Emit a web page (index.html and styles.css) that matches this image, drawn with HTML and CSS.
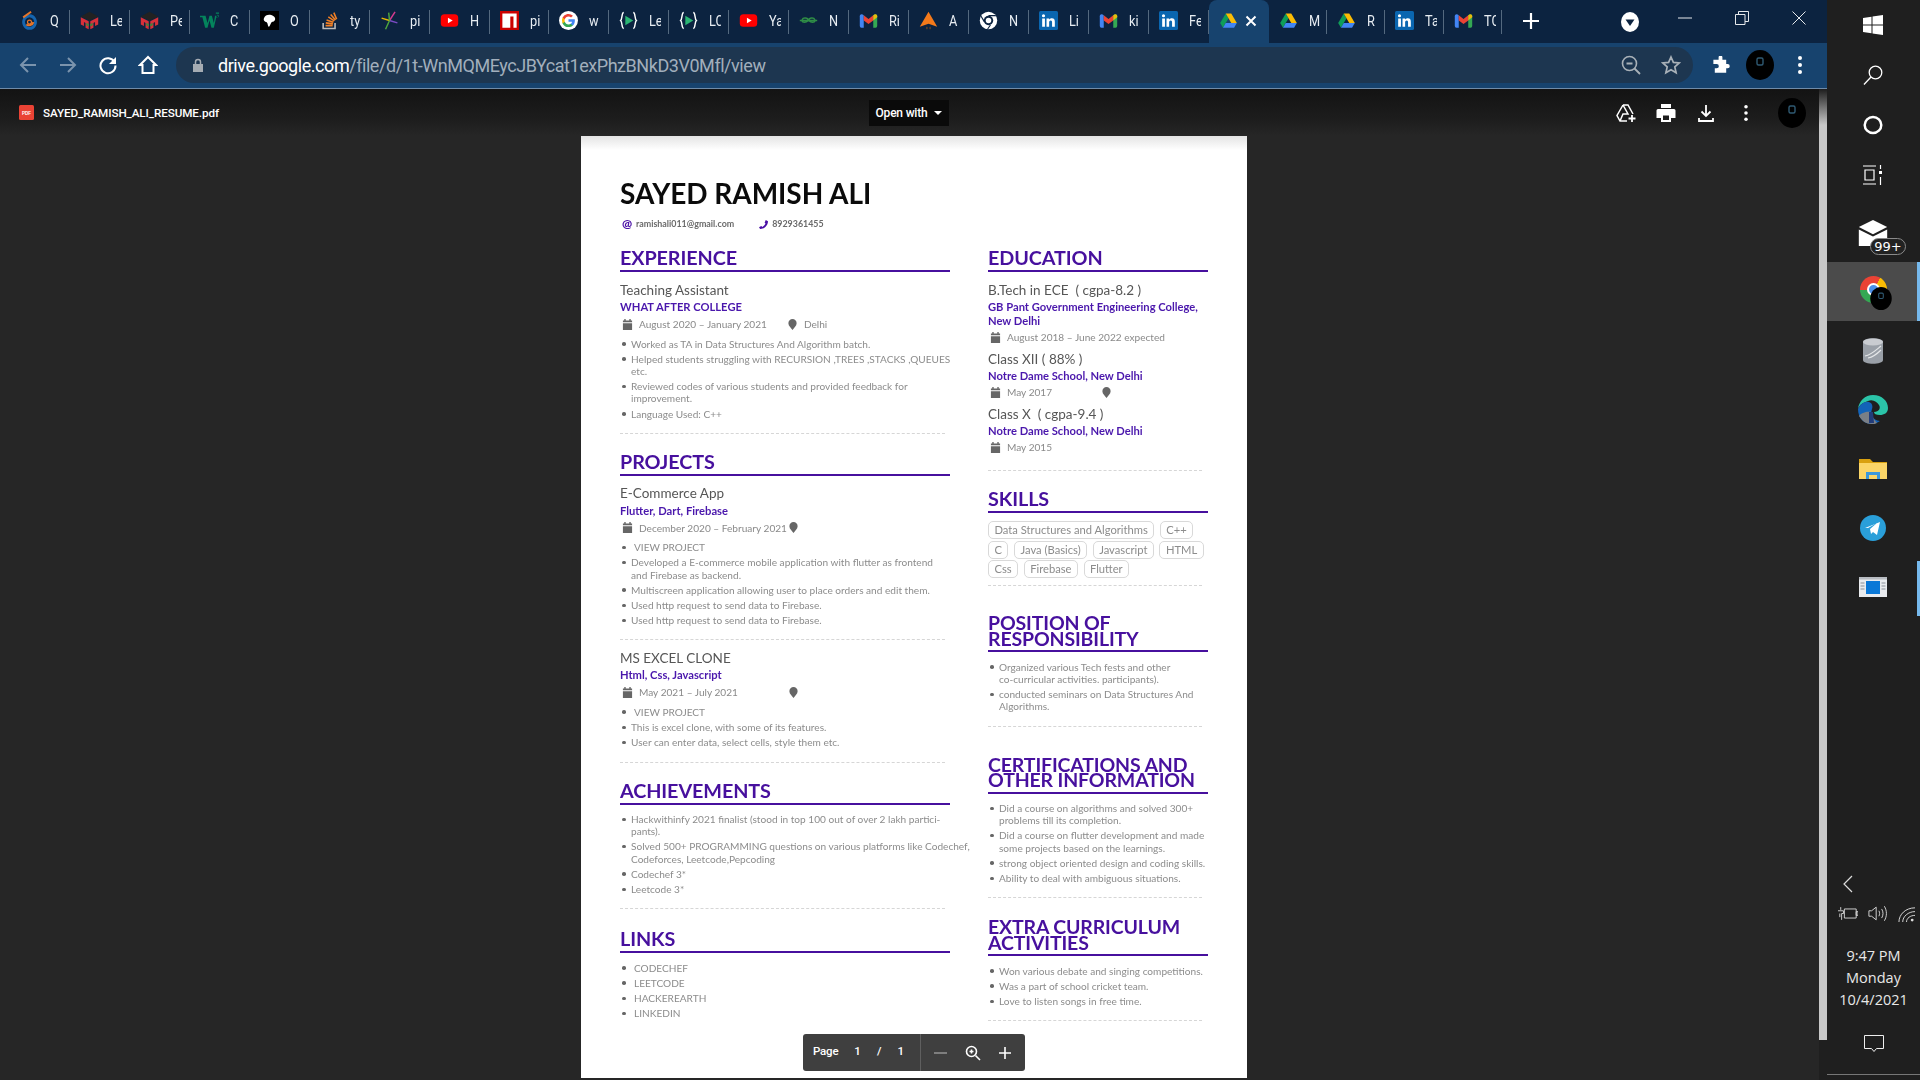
FILE: index.html
```html
<!DOCTYPE html>
<html lang="en">
<head>
<meta charset="utf-8">
<title>SAYED_RAMISH_ALI_RESUME.pdf</title>
<link rel="stylesheet" href="styles.css">
</head>
<body>
<svg class="defs" width="0" height="0" aria-hidden="true">
  <symbol id="quora" viewBox="0 0 24 24"><path fill="none" stroke="#1565b0" stroke-width="3.5" d="M12 6a7.5 8 0 1 0 .1 0"/><path fill="none" stroke="#e8762a" stroke-width="2.5" d="M8 17a6 6 0 0 0 9-3M4 8 14 1"/><circle cx="12" cy="14" r="2.5" fill="none" stroke="#e8762a" stroke-width="1.5"/></symbol>
  <symbol id="pep" viewBox="0 0 24 24"><path fill="#222" d="M12 1 23 7 12 12 1 7z"/><path fill="#d8303a" d="M1 8 11 13v10L7 21v-6l-2-1v5l-4-2z"/><path fill="#d8303a" d="M23 8 13 13v10l4-2v-6l2-1v5l4-2z"/><path fill="#3a8a3a" d="M8 15l3 1.500v3l-3-1.500zM16 15l-3 1.500v3l3-1.500z"/></symbol>
  <symbol id="w3" viewBox="0 0 24 24"><path fill="#04845c" d="M0 6h7l2.500 9L12 6h3l2.500 9L19 6h2l-3.500 15h-3L12 12l-2.500 9h-3L3 8H0z"/><path fill="#04845c" d="M20 2h4v1l-2 1.500a2 2 0 1 1-2 3h1a1 1 0 1 0 1-1.500V5l1-1.500h-3z"/></symbol>
  <symbol id="blob" viewBox="0 0 24 24"><rect width="24" height="24" fill="#000"/><path fill="#fff" d="M5 9c1-4 6-5 9-4s6 3 5 6-4 2-5 4-2 5-3 5-1-5-3-6-4-2-3-5z"/></symbol>
  <symbol id="so" viewBox="0 0 24 24"><path fill="none" stroke="#bcbbbb" stroke-width="2" d="M4 15v7h15v-7"/><path fill="none" stroke="#f48024" stroke-width="2" d="M7 18.500h9M7.300 15l9 1.300M8.300 11.300l8.600 3M10.500 7.500l7.500 5M13.500 4.500l6 7M17.500 2l3.500 8.500"/></symbol>
  <symbol id="pi" viewBox="0 0 24 24"><g fill="none" stroke-width="1.800"><path stroke="#d63b8f" d="M12 12 19 1"/><path stroke="#7b4bc4" d="M12 12 22 15"/><path stroke="#e8b800" d="M12 12 2 9"/><path stroke="#4fa83d" d="M12 12 7 23"/><path stroke="#4fa83d" d="M12 12 11 2"/></g></symbol>
  <symbol id="yt" viewBox="0 0 24 24"><rect x="1" y="4" width="22" height="16" rx="4.500" fill="#f00"/><path fill="#fff" d="M10 8.500 16 12l-6 3.500z"/></symbol>
  <symbol id="npm" viewBox="0 0 24 24"><rect width="24" height="24" fill="#cb0000"/><path fill="#fff" d="M3 3h18v18h-4V7h-4v14H3z"/></symbol>
  <symbol id="goog" viewBox="0 0 24 24"><circle cx="12" cy="12" r="12" fill="#fff"/><path fill="#4285f4" d="M20 12.200c0-.6 0-1.100-.1-1.700H12v3.200h4.500a3.900 3.900 0 0 1-1.700 2.500v2.100h2.700c1.600-1.400 2.500-3.500 2.500-6.100z"/><path fill="#34a853" d="M12 20.300c2.300 0 4.100-.8 5.500-2l-2.700-2.100c-.7.500-1.700.8-2.800.8-2.200 0-4-1.500-4.700-3.400H4.500v2.100A8.300 8.300 0 0 0 12 20.300z"/><path fill="#fbbc05" d="M7.300 13.600a5 5 0 0 1 0-3.200V8.300H4.500a8.300 8.300 0 0 0 0 7.400z"/><path fill="#ea4335" d="M12 7c1.200 0 2.300.4 3.200 1.300l2.400-2.400A8.300 8.300 0 0 0 4.500 8.300l2.800 2.100C8 8.500 9.800 7 12 7z"/></symbol>
  <symbol id="lc" viewBox="0 0 24 24"><path fill="none" stroke="#fff" stroke-width="1.800" d="M6 2C3 2 4.500 10 2 12c2.500 2 1 10 4 10M18 2c3 0 1.500 8 4 10-2.500 2-1 10-4 10"/><path fill="#2bb673" d="M8 6 18 12 8 18z"/></symbol>
  <symbol id="gfg" viewBox="0 0 24 24"><path fill="none" stroke="#2f8d46" stroke-width="1.800" d="M12 12h11M12 12H1M12 12c-1-4-7-4-8-1s3 5 8 1c5 4 9 2 8-1s-7-3-8 1z"/></symbol>
  <symbol id="gm" viewBox="0 0 24 24"><path fill="#4285f4" d="M1 6.500c0-2 2-3 3.500-2L6 5.500V21H3a2 2 0 0 1-2-2z"/><path fill="#34a853" d="M23 6.500c0-2-2-3-3.500-2L18 5.500V21h3a2 2 0 0 0 2-2z"/><path fill="#ea4335" d="M6 5.500 12 10l6-4.500V12l-6 4.500L6 12z"/><path fill="#fbbc04" d="M18 5.500 19.500 4.500c1.500-1 3.500 0 3.500 2V8l-5 4z" opacity=".9"/></symbol>
  <symbol id="arrow" viewBox="0 0 24 24"><path fill="#f57a1a" d="M12 1 23 20 12 16 1 20z"/><path stroke="#a85a10" stroke-width="1" d="M10 20v3M14 20v3"/></symbol>
  <symbol id="chromew" viewBox="0 0 24 24"><circle cx="12" cy="12" r="11" fill="#fff"/><circle cx="12" cy="12" r="6" fill="#0c2340"/><circle cx="12" cy="12" r="3.500" fill="#fff"/><path fill="#0c2340" d="M12 5h9l.5 1.500H12zM6 14 2 7l1-1 5 8zM15 18l-3.500 5h-1.500l4-6z"/></symbol>
  <symbol id="li" viewBox="0 0 24 24"><rect width="24" height="24" rx="2" fill="#0a66b0"/><path fill="#fff" d="M4 9.500h3.500V20H4zM5.700 4a2 2 0 1 1 0 4 2 2 0 0 1 0-4zM9.500 9.500h3.300V11c.6-1 1.800-1.800 3.400-1.800 3.200 0 3.800 2.100 3.800 4.800v6h-3.500v-5.300c0-1.300 0-2.800-1.700-2.800s-2 1.300-2 2.700V20H9.500z"/></symbol>
  <symbol id="drive" viewBox="0 0 24 24"><path fill="#0f9d58" d="M8.500 3 12 9 5 21 1.500 15z"/><path fill="#fbbc04" d="M8.500 3h7l7 12h-7z"/><path fill="#4285f4" d="M8.500 15h14l-3.500 6H5z"/></symbol>
  <symbol id="cal" viewBox="0 0 12 12"><path fill="#666" d="M2.500 0h1.500v1.500h4V0h1.500v1.500H11V3.500H1V1.500h1.500zM1 4.500h10V12H1z"/></symbol>
  <symbol id="pin" viewBox="0 0 12 12"><path fill="#666" d="M6 0a4.500 4.500 0 0 1 4.500 4.500C10.500 7.500 7.500 9.500 6 12 4.500 9.500 1.500 7.500 1.500 4.500A4.500 4.500 0 0 1 6 0z"/></symbol>
  <symbol id="dots" viewBox="0 0 4 18"><circle cx="2" cy="2" r="2"/><circle cx="2" cy="9" r="2"/><circle cx="2" cy="16" r="2"/></symbol>
  <symbol id="ava" viewBox="0 0 28 30"><ellipse cx="14" cy="15" rx="14" ry="15" fill="#000"/><rect x="11" y="8" width="6" height="7" rx="1.500" fill="none" stroke="#2f5a73" stroke-width="1.400"/></symbol>
</svg>

<div class="screen">
  <div class="browser">
    <div class="tabstrip">
      <div class="tab"><svg class="fav"><use href="#quora"/></svg><span class="tl">Q</span></div>
      <div class="tab"><svg class="fav"><use href="#pep"/></svg><span class="tl">Le</span></div>
      <div class="tab"><svg class="fav"><use href="#pep"/></svg><span class="tl">Pe</span></div>
      <div class="tab"><svg class="fav"><use href="#w3"/></svg><span class="tl">C</span></div>
      <div class="tab"><svg class="fav"><use href="#blob"/></svg><span class="tl">O</span></div>
      <div class="tab"><svg class="fav"><use href="#so"/></svg><span class="tl">ty</span></div>
      <div class="tab"><svg class="fav"><use href="#pi"/></svg><span class="tl">pi</span></div>
      <div class="tab"><svg class="fav"><use href="#yt"/></svg><span class="tl">H</span></div>
      <div class="tab"><svg class="fav"><use href="#npm"/></svg><span class="tl">pi</span></div>
      <div class="tab"><svg class="fav"><use href="#goog"/></svg><span class="tl">w</span></div>
      <div class="tab"><svg class="fav"><use href="#lc"/></svg><span class="tl">Le</span></div>
      <div class="tab"><svg class="fav"><use href="#lc"/></svg><span class="tl">LC</span></div>
      <div class="tab"><svg class="fav"><use href="#yt"/></svg><span class="tl">Ya</span></div>
      <div class="tab"><svg class="fav"><use href="#gfg"/></svg><span class="tl">N</span></div>
      <div class="tab"><svg class="fav"><use href="#gm"/></svg><span class="tl">Ri</span></div>
      <div class="tab"><svg class="fav"><use href="#arrow"/></svg><span class="tl">A</span></div>
      <div class="tab"><svg class="fav"><use href="#chromew"/></svg><span class="tl">N</span></div>
      <div class="tab"><svg class="fav"><use href="#li"/></svg><span class="tl">Li</span></div>
      <div class="tab"><svg class="fav"><use href="#gm"/></svg><span class="tl">ki</span></div>
      <div class="tab"><svg class="fav"><use href="#li"/></svg><span class="tl">Fe</span></div>
      <div class="tab tab-active"><svg class="fav"><use href="#drive"/></svg><svg class="tabx" viewBox="0 0 12 12"><path d="M1.500 1.500l9 9M10.500 1.500l-9 9"/></svg></div>
      <div class="tab tab-narrow"><svg class="fav"><use href="#drive"/></svg><span class="tl">M</span></div>
      <div class="tab tab-narrow"><svg class="fav"><use href="#drive"/></svg><span class="tl">R</span></div>
      <div class="tab tab-narrow"><svg class="fav"><use href="#li"/></svg><span class="tl">Ta</span></div>
      <div class="tab tab-narrow"><svg class="fav"><use href="#gm"/></svg><span class="tl">TC</span></div>
      <svg class="newtab" viewBox="0 0 16 16"><path d="M8 0v16M0 8h16"/></svg>
      <svg class="tabdrop" viewBox="0 0 18 20"><ellipse cx="9" cy="10" rx="9" ry="10" fill="#fff"/><path d="M4.500 7.500h9L9 14z" fill="#0c2340"/></svg>
      <div class="winbtns">
        <svg class="win" viewBox="0 0 14 14"><path d="M0 7h14"/></svg>
        <svg class="win" viewBox="0 0 14 14"><path d="M.5 3.500h9.500V13.500H.5zM3.500 3.500V.5H13.500V10.500H10"/></svg>
        <svg class="win" viewBox="0 0 14 14"><path d="M.5.500l13 13M13.500.5l-13 13"/></svg>
      </div>
    </div>

    <div class="toolbar">
      <svg class="tbi" viewBox="0 0 20 20"><path class="dim" d="M18 10H3M10 3l-7 7 7 7"/></svg>
      <svg class="tbi" viewBox="0 0 20 20"><path class="dim" d="M2 10h15M10 3l7 7-7 7"/></svg>
      <svg class="tbi" viewBox="0 0 20 20"><path class="lit" d="M16.500 7A7.500 7.500 0 1 0 17.500 10.500"/><path fill="#fff" d="M18 2v7h-7z"/></svg>
      <svg class="tbi" viewBox="0 0 20 20"><path class="lit" d="M10 2 2 10h2.500v8h11v-8H18z"/></svg>
      <div class="omni">
        <svg class="lock" viewBox="0 0 12 14"><path fill="#a5acb3" d="M1 6h10v8H1z"/><path fill="none" stroke="#a5acb3" stroke-width="1.500" d="M3.500 6V4a2.500 2.500 0 0 1 5 0v2"/></svg>
        <div class="url"><span class="host">drive.google.com</span>/file/d/1t-WnMQMEycJBYcat1exPhzBNkD3V0Mfl/view</div>
        <svg class="omi" viewBox="0 0 20 20"><circle cx="8.500" cy="8.500" r="7" fill="none" stroke="#a9b1b8" stroke-width="1.600"/><path stroke="#a9b1b8" stroke-width="1.800" d="M13.500 13.500 19 19M5.500 8.500h6"/></svg>
        <svg class="omi" viewBox="0 0 20 20"><path fill="none" stroke="#a9b1b8" stroke-width="1.700" d="M10 2l2.400 5.400 5.800.6-4.400 3.900 1.300 5.800L10 14.700l-5.100 3 1.300-5.800L1.800 8l5.800-.6z"/></svg>
      </div>
      <svg class="puzzle" viewBox="0 0 20 20"><path fill="#fff" d="M8 1.500a2 2 0 0 1 4 0V4h4v4.500h1.500a2 2 0 0 1 0 4.500H16v4.500H4V13H6a2 2 0 0 0 0-4.500H2.500V4H8z"/></svg>
      <svg class="avatar"><use href="#ava"/></svg>
      <svg class="tbdots" fill="#fff"><use href="#dots"/></svg>
    </div>

    <div class="viewer">
      <div class="docarea">
        <div class="dochead">
          <svg class="pdficon" viewBox="0 0 15 15"><rect width="15" height="15" rx="1.500" fill="#ea4335"/><text x="7.500" y="9.500" text-anchor="middle" class="pdft">PDF</text></svg>
          <div class="fname">SAYED_RAMISH_ALI_RESUME.pdf</div>
          <div class="openwith">Open with<span class="caret"></span></div>
          <div class="headicons">
            <svg class="hi" viewBox="0 0 20 20"><path fill="none" stroke="#fff" stroke-width="1.500" d="M7 2h5l5 9M7 2 1 12.500 4 18h7M7 2l5 9H7l-3 7"/><path stroke="#fff" stroke-width="1.800" d="M16 12v7M12.500 15.500h7"/></svg>
            <svg class="hi" viewBox="0 0 20 20"><path fill="#fff" d="M5 1h10v4H5zM2 6h16a1.500 1.500 0 0 1 1.500 1.500V15H15v4H5v-4H.5V7.500A1.500 1.500 0 0 1 2 6zM7 12.500V17h6v-4.500z"/></svg>
            <svg class="hi" viewBox="0 0 20 20"><path fill="none" stroke="#fff" stroke-width="1.800" d="M10 2v10M5.500 8.500 10 13l4.500-4.500M3 15v3h14v-3"/></svg>
            <svg class="hi hi-dots" fill="#fff"><use href="#dots"/></svg>
            <svg class="hi-ava"><use href="#ava"/></svg>
          </div>
        </div>

        <div class="page">
          <div class="paper">
            <h1 class="name">SAYED RAMISH ALI</h1>
            <div class="contact">
              <span class="cicon">@</span><span class="ctext ctext-mail">ramishali011@gmail.com</span>
              <svg class="phone" viewBox="0 0 12 12"><path fill="#4a10a6" d="M9 0l3 1.500C12 7 7 12 1.500 12L0 9.500 3 8l1.500 1.300C6 8.500 8 6.500 8.700 4.800L7.500 3.500z"/></svg><span class="ctext">8929361455</span>
            </div>
            <div class="cols">
              <div class="col-left">
                <section>
                  <h2 class="h">EXPERIENCE</h2>
                  <div class="title">Teaching Assistant</div>
                  <div class="org">WHAT AFTER COLLEGE</div>
                  <div class="meta"><svg class="mi"><use href="#cal"/></svg><span class="mdate">August 2020 – January 2021</span><svg class="mi mi-pin1"><use href="#pin"/></svg><span>Delhi</span></div>
                  <ul class="list">
                    <li>Worked as TA in Data Structures And Algorithm batch.</li>
                    <li class="wide">Helped students struggling with RECURSION ,TREES ,STACKS ,QUEUES etc.</li>
                    <li>Reviewed codes of various students and provided feedback for improvement.</li>
                    <li>Language Used: C++</li>
                  </ul>
                  <div class="dash"></div>
                </section>
                <section class="sec">
                  <h2 class="h">PROJECTS</h2>
                  <div class="title">E-Commerce App</div>
                  <div class="org">Flutter, Dart, Firebase</div>
                  <div class="meta"><svg class="mi"><use href="#cal"/></svg><span class="mdate mdate-c">December 2020 – February 2021</span><svg class="mi"><use href="#pin"/></svg></div>
                  <ul class="list">
                    <li class="lk">VIEW PROJECT</li>
                    <li>Developed a E-commerce mobile application with flutter as frontend and Firebase as backend.</li>
                    <li>Multiscreen application allowing user to place orders and edit them.</li>
                    <li>Used http request to send data to Firebase.</li>
                    <li>Used http request to send data to Firebase.</li>
                  </ul>
                  <div class="dash dash-tight"></div>
                  <div class="title">MS EXCEL CLONE</div>
                  <div class="org">Html, Css, Javascript</div>
                  <div class="meta"><svg class="mi"><use href="#cal"/></svg><span class="mdate-w">May 2021 – July 2021</span><svg class="mi"><use href="#pin"/></svg></div>
                  <ul class="list">
                    <li class="lk">VIEW PROJECT</li>
                    <li>This is excel clone, with some of its features.</li>
                    <li>User can enter data, select cells, style them etc.</li>
                  </ul>
                  <div class="dash"></div>
                </section>
                <section class="sec">
                  <h2 class="h">ACHIEVEMENTS</h2>
                  <ul class="list list-first">
                    <li>Hackwithinfy 2021 finalist (stood in top 100 out of over 2 lakh partici-<br>pants).</li>
                    <li class="over">Solved 500+ PROGRAMMING questions on various platforms like Codechef, Codeforces, Leetcode,Pepcoding</li>
                    <li>Codechef 3*</li>
                    <li>Leetcode 3*</li>
                  </ul>
                  <div class="dash"></div>
                </section>
                <section class="sec sec-links">
                  <h2 class="h">LINKS</h2>
                  <ul class="list list-first">
                    <li class="lk">CODECHEF</li>
                    <li class="lk">LEETCODE</li>
                    <li class="lk">HACKEREARTH</li>
                    <li class="lk">LINKEDIN</li>
                  </ul>
                </section>
              </div>
              <div class="col-right">
                <section>
                  <h2 class="h">EDUCATION</h2>
                  <div class="title">B.Tech in ECE &nbsp;( cgpa-8.2 )</div>
                  <div class="org">GB Pant Government Engineering College, New Delhi</div>
                  <div class="meta"><svg class="mi"><use href="#cal"/></svg><span>August 2018 – June 2022 expected</span></div>
                  <div class="title title-next">Class XII ( 88% )</div>
                  <div class="org">Notre Dame School, New Delhi</div>
                  <div class="meta"><svg class="mi"><use href="#cal"/></svg><span class="mdate-edu">May 2017</span><svg class="mi"><use href="#pin"/></svg></div>
                  <div class="title title-next">Class X &nbsp;( cgpa-9.4 )</div>
                  <div class="org">Notre Dame School, New Delhi</div>
                  <div class="meta"><svg class="mi"><use href="#cal"/></svg><span>May 2015</span></div>
                  <div class="dash dash-edu"></div>
                </section>
                <section class="sec">
                  <h2 class="h">SKILLS</h2>
                  <div class="chips">
                    <span class="chip">Data Structures and Algorithms</span><span class="chip">C++</span>
                    <span class="chip">C</span><span class="chip">Java (Basics)</span><span class="chip">Javascript</span><span class="chip">HTML</span>
                    <span class="chip">Css</span><span class="chip">Firebase</span><span class="chip">Flutter</span>
                  </div>
                  <div class="dash dash-skills"></div>
                </section>
                <section class="sec sec-pos">
                  <h2 class="h h2l">POSITION OF<br>RESPONSIBILITY</h2>
                  <ul class="list list-first">
                    <li>Organized various Tech fests and other<br>co-curricular activities. participants).</li>
                    <li>conducted seminars on Data Structures And Algorithms.</li>
                  </ul>
                  <div class="dash"></div>
                </section>
                <section class="sec sec-cert">
                  <h2 class="h h2l">CERTIFICATIONS AND<br>OTHER INFORMATION</h2>
                  <ul class="list list-first">
                    <li>Did a course on algorithms and solved 300+ problems till its completion.</li>
                    <li>Did a course on flutter development and made some projects based on the learnings.</li>
                    <li>strong object oriented design and coding skills.</li>
                    <li>Ability to deal with ambiguous situations.</li>
                  </ul>
                  <div class="dash"></div>
                </section>
                <section class="sec sec-extra">
                  <h2 class="h h2l">EXTRA CURRICULUM<br>ACTIVITIES</h2>
                  <ul class="list list-first">
                    <li>Won various debate and singing competitions.</li>
                    <li>Was a part of school cricket team.</li>
                    <li>Love to listen songs in free time.</li>
                  </ul>
                  <div class="dash"></div>
                </section>
              </div>
            </div>
          </div>
        </div>

        <div class="pagebar">
          <div class="pb-left"><span class="pb-page">Page</span><span>1</span><span>/</span><span>1</span></div>
          <div class="pb-right">
            <svg class="pbi" viewBox="0 0 14 14"><path d="M0 7h13" stroke="#8f8f8f"/></svg>
            <svg class="pbi pbi-z" viewBox="0 0 16 16"><circle cx="6.500" cy="6.500" r="5" fill="none"/><path d="M10.500 10.500 15 15M4.500 6.500h4M6.500 4.500v4"/></svg>
            <svg class="pbi" viewBox="0 0 14 14"><path d="M1 7h12M7 1v12"/></svg>
          </div>
        </div>
      </div>
      <div class="scroll"></div>
    </div>
  </div>

  <aside class="taskbar">
    <div class="tk tk-s"><svg class="ti ti-win" viewBox="0 0 20 20"><path fill="#fff" d="M0 3l8.500-1.300v7.800H0zM9.500 1.500 20 0v9.500H9.500zM0 10.500h8.500v7.800L0 17zM9.500 10.500H20V20L9.500 18.500z"/></svg></div>
    <div class="tk tk-s"><svg class="ti" viewBox="0 0 20 20"><circle cx="12.500" cy="7.500" r="6.300" fill="none" stroke="#fff" stroke-width="1.300"/><path stroke="#fff" stroke-width="1.300" d="M8 12 1 19.500"/></svg></div>
    <div class="tk tk-s"><svg class="ti" viewBox="0 0 20 20"><ellipse cx="10" cy="10" rx="8.300" ry="8" fill="none" stroke="#fff" stroke-width="2.500"/></svg></div>
    <div class="tk tk-s tk-view"><svg class="ti" viewBox="0 0 20 20"><path fill="none" stroke="#fff" stroke-width="1.200" d="M0 1h13M0 19h13M2 5h9v10H2zM17.500 0v4M17.500 12v8"/><rect x="16" y="6" width="3" height="3" fill="#fff"/></svg></div>
    <div class="tk tk-mail">
      <svg class="ti" viewBox="0 0 24 22"><path fill="#fff" d="M12 0 24 6 12 12 0 6zM0 8l12 6 12-6v14H0z"/></svg>
      <span class="badge">99+</span>
    </div>
    <div class="tk tk-active">
      <span class="chromeic"><span class="chromeic-in"></span></span>
      <svg class="chromeava"><use href="#ava"/></svg>
    </div>
    <div class="tk"><svg class="ti ti-db" viewBox="0 0 22 26"><path fill="#9aa0a8" d="M1 4c0-5 20-5 20 0v18c0 5-20 5-20 0z"/><ellipse cx="11" cy="4" rx="10" ry="3.500" fill="#c9ccd1"/><path fill="none" stroke="#e4e6e8" stroke-width="1.200" d="M3 18c6-1 10-5 16-10M6 20c5-1 9-4 13-8"/></svg></div>
    <div class="tk"><svg class="ti ti-edge" viewBox="0 0 30 30"><path fill="#2bc4a8" d="M15 0c9 0 15 6 15 13 0 5-4 7-8 7s-6-1-6-3c5 0 7-4 5-7S15 4 10 6 2 9 0 14C1 6 7 0 15 0z"/><path fill="#1363b8" d="M0 14c2-5 7-8 11-7 3 1 4 4 3 7-2 5 0 11 8 12-3 2-5 3-8 3C6 29 0 23 0 14z"/><path fill="#7a7f86" d="M1 21c2-3 8-5 12-4 1 4 3 8 6 11-2 1-3 1-5 1-6 0-10-3-13-8z"/><path fill="#223c7a" d="M11 17h4l1 11h-5z"/></svg></div>
    <div class="tk"><svg class="ti ti-folder" viewBox="0 0 28 20"><path fill="#d9a00f" d="M0 0h11l3 3h14v4H0z"/><path fill="#fbd567" d="M0 4h28v16H0z"/><path fill="#3b98dc" d="M7 13h14v7h-3v-4h-8v4H7z"/></svg></div>
    <div class="tk"><svg class="ti ti-tg" viewBox="0 0 26 26"><circle cx="13" cy="13" r="13" fill="#2a9fd9"/><path fill="#fff" d="M5 13 20 7l-3 13-4-3-2 2-1-5 7-6-9 5z"/></svg></div>
    <div class="tk"><svg class="ti ti-app" viewBox="0 0 28 20"><rect width="28" height="20" fill="#e9ebee"/><rect width="28" height="2.500" fill="#b8bcc2"/><rect x="7" y="4" width="14" height="13" fill="#0a78d7"/><path stroke="#8a9099" stroke-width="1" d="M1.500 6h4M1.500 9h4M1.500 12h4M22.500 6h4M22.500 9h4M22.500 12h4"/></svg><span class="tk-ind"></span></div>

    <div class="tray">
      <svg class="chev" viewBox="0 0 10 18"><path d="M9 1 1 9l8 8"/></svg>
      <div class="trayrow">
        <svg class="tri" viewBox="0 0 22 14"><path d="M7 2h13v10H7zM20 5h2v4h-2zM3 0v3M0 4h6v3H4v7M2 7v4"/></svg>
        <svg class="tri" viewBox="0 0 22 18"><path d="M1 6h3l5-4v14l-5-4H1zM12 6c1 2 1 4 0 6M15 4c2 3 2 7 0 10M18 1c3 5 3 11 0 16"/></svg>
        <svg class="tri tri-wifi" viewBox="0 0 18 18"><path d="M1 18C1 10 8 3 18 3M5 18c0-6 6-11 13-11M9 18c0-4 4-7 9-7"/><circle cx="15" cy="16" r="1.500" fill="#ddd"/></svg>
      </div>
      <div class="clock"><div>9:47 PM</div><div>Monday</div><div>10/4/2021</div></div>
      <svg class="action" viewBox="0 0 20 18"><path d="M.5.500h19v13h-7L10 16.500 7.500 13.500h-7z"/></svg>
      <div class="tkline"></div>
    </div>
  </aside>
</div>
</body>
</html>
```

FILE: styles.css
```css
* { box-sizing: border-box; }
html, body { margin: 0; padding: 0; width: 1920px; height: 1080px; overflow: hidden; background: #1f1f1f; }
body { font-family: "Roboto", "Liberation Sans", sans-serif; }
.defs { position: absolute; }
.screen { display: flex; width: 1920px; height: 1080px; }
.browser { width: 1827px; height: 1080px; display: flex; flex-direction: column; flex: none; }

/* tabs */
.tabstrip { height: 43px; background: #0c2340; display: flex; align-items: stretch; padding-left: 10px; flex: none; }
.tab { width: 59.95px; flex: none; display: flex; align-items: center; padding: 0 0 2px 10px; position: relative; color: #fff; }
.tab-narrow { width: 58.4px; }
.tab::after { content: ""; position: absolute; right: 0; top: 10px; height: 24px; width: 1px; background: #54697f; }
.tab-active { background: #17436e; border-radius: 8px 8px 0 0; }
.tab-active::after { display: none; }
.fav { width: 19px; height: 19px; flex: none; }
.tl { margin-left: 11px; width: 14px; overflow: hidden; font-size: 15px; line-height: 20px; white-space: nowrap; color: #e8edf2; transform: scaleX(.85); transform-origin: left; }
.tabx { width: 12px; height: 12px; margin-left: 7px; }
.tabx path { stroke: #fff; stroke-width: 2; fill: none; }
.newtab { width: 16px; height: 16px; margin: 13px 0 0 20.4px; }
.newtab path { stroke: #fff; stroke-width: 2.2; fill: none; }
.tabdrop { width: 18px; height: 20px; margin: 12px 0 0 82px; }
.winbtns { display: flex; gap: 43px; margin-left: 39px; margin-top: 11px; }
.win { width: 14px; height: 14px; }
.win path { stroke: #e6e9ec; stroke-width: 1; fill: none; }

/* toolbar */
.toolbar { height: 46px; background: #17436e; border-bottom: 1px solid #6f8ba8; display: flex; align-items: center; padding: 0 0 1px 18px; flex: none; }
.tbi { width: 20px; height: 20px; flex: none; margin-right: 20px; }
.dim { stroke: #7b94ad; stroke-width: 2; fill: none; }
.lit { stroke: #fff; stroke-width: 2; fill: none; }
.omni { width: 1517px; height: 36px; margin-left: -2px; background: #1d3650; border-radius: 18px; display: flex; align-items: center; padding-left: 16px; flex: none; }
.lock { width: 12px; height: 14px; flex: none; }
.url { margin-left: 14px; font-size: 18px; color: #a2afbc; white-space: nowrap; width: 1403px; flex: none; letter-spacing: -.45px; }
.host { color: #fff; }
.omi { width: 20px; height: 20px; flex: none; margin-right: 20px; }
.puzzle { width: 19px; height: 19px; margin-left: 18px; flex: none; }
.avatar { width: 28px; height: 30px; margin-left: 16px; flex: none; }
.tbdots { width: 4px; height: 18px; margin-left: 24px; flex: none; }

/* viewer */
.viewer { flex: 1; display: flex; min-height: 0; }
.docarea { flex: 1; min-width: 0; background: #262626; position: relative; display: flex; flex-direction: column; overflow: hidden; }
.scroll { width: 8px; flex: none; background: linear-gradient(#1d1d1d 0, #c8c8c8 36px, #c8c8c8 100%); height: 951px; }
.dochead { height: 47px; flex: none; background: linear-gradient(#131313, #1c1c1c 60%, #262626); display: flex; align-items: center; padding-left: 19px; position: relative; }
.pdficon { width: 15px; height: 15px; flex: none; }
.pdft { font-family: "Liberation Sans", sans-serif; font-size: 4.5px; font-weight: 700; fill: #fff; }
.fname { margin-left: 9px; width: 826px; flex: none; font-size: 11.7px; font-weight: 500; color: #fff; letter-spacing: -.1px; }
.openwith { width: 80px; height: 26px; background: #0a0a0a; display: flex; align-items: center; justify-content: center; color: #fff; font-size: 12px; font-weight: 500; flex: none; letter-spacing: -.2px; }
.caret { width: 0; height: 0; border: 4px solid transparent; border-top: 4px solid #fff; border-bottom: 0; margin-left: 7px; }
.headicons { display: flex; align-items: center; margin-left: 667px; gap: 20px; }
.hi { width: 20px; height: 20px; flex: none; }
.hi-dots { width: 4px; height: 16px; margin: 0 0 0 8px; }
.hi-ava { width: 28px; height: 30px; margin-left: 10px; flex: none; }

.page { flex: 1; min-height: 0; padding-left: 581px; overflow: hidden; }
.paper { width: 666px; height: 942px; background: #fff; padding: 41px 39px 0 39px; font-family: "Lato", "Liberation Sans", sans-serif; filter: blur(.4px); background-image: linear-gradient(#e4e4e4, #fff 14px); }

.name { margin: 0; font-size: 28px; line-height: 32px; font-weight: 700; color: #0b0b0b; letter-spacing: -.05px; }
.contact { display: flex; align-items: center; height: 14px; margin-top: 8px; padding-left: 2px; }
.cicon { font-size: 12px; font-weight: 900; color: #4a10a6; line-height: 14px; width: 14px; }
.ctext { font-size: 8.9px; color: #6a6a6a; font-weight: 700; line-height: 14px; }
.ctext-mail { margin-right: 25px; }
.phone { width: 9px; height: 9px; margin-right: 4px; }

.cols { display: flex; margin-top: 18px; }
.col-left { width: 330px; flex: none; margin-right: 38px; }
.col-right { width: 220px; flex: none; }
.h { margin: 0; font-size: 19.8px; line-height: 16px; font-weight: 700; color: #47109e; padding-bottom: 5px; border-bottom: 2.5px solid #47109e; letter-spacing: -.1px; white-space: nowrap; }
.h2l { font-size: 19.5px; line-height: 15.5px; padding-bottom: 4px; letter-spacing: -.15px; }
.title { font-size: 13.5px; line-height: 15px; color: #565656; margin-top: 10.5px; }
.title.title-next { margin-top: 7.5px; }
.org { font-size: 11.2px; line-height: 14px; font-weight: 700; color: #4a17ac; margin-top: 2.5px; }
.meta { display: flex; align-items: center; height: 14px; margin-top: 3px; font-size: 10.1px; color: #8a8a8a; padding-left: 2px; }
.col-right .meta { margin-top: 2px; }
.mi { width: 11px; height: 11px; flex: none; margin-right: 6px; }
.mdate { margin-right: 20px; }
.mdate-c { margin-right: 1px; }
.mdate-w { width: 149px; }
.mdate-edu { width: 94px; }
.list { list-style: none; margin: 6.5px 0 0; padding: 0; }
.list-first { margin-top: 8.5px; }
.list li { font-size: 10.1px; line-height: 12.2px; color: #8c8c8c; padding-left: 11px; position: relative; margin-bottom: 3px; }
.list li:last-child { margin-bottom: 0; }
.list li::before { content: ""; position: absolute; left: 2px; top: 4.5px; width: 3.5px; height: 3.5px; border-radius: 50%; background: #666; }
.list li.lk { padding-left: 14px; }
.list li.over { margin-right: -20px; }
.list li.wide { margin-right: -6px; }
.dash { border-top: 1px dashed #d6d6d6; margin-top: 13px; margin-right: 5px; }
.dash-tight { margin-bottom: 2px; }
.sec { margin-top: 19px; }
.sec-links { margin-top: 21px; }
.sec-extra { margin-top: 21px; }
.dash-edu { margin-top: 16px; margin-right: 6px; }
.chips { display: flex; flex-wrap: wrap; gap: 1.6px 5.5px; margin-top: 8px; }
.chip { font-size: 11.2px; line-height: 16px; height: 18px; padding: 0 5.5px; border: 1px solid #d9d9d9; border-radius: 5px; color: #8c8c8c; }
.dash-skills { margin-top: 7px; margin-right: 6px; }
.sec-pos { margin-top: 29px; }
.sec-cert { margin-top: 30px; }
.col-right .dash { margin-right: 6px; }

/* page bar */
.pagebar { position: absolute; left: 803px; top: 945px; width: 222px; height: 37px; background: #3f3f3f; border-radius: 3px; display: flex; color: #fff; font-size: 11.5px; font-weight: 500; }
.pb-left { width: 118px; border-right: 1px solid #5f5f5f; display: flex; align-items: center; padding: 0 0 3px 10px; gap: 12px; flex: none; }
.pb-left span + span { margin-left: 4px; }
.pb-page { margin-right: 0; letter-spacing: -.2px; }
.pb-right { flex: 1; display: flex; align-items: center; padding-left: 13px; gap: 17px; }
.pbi { width: 14px; height: 14px; flex: none; }
.pbi path, .pbi circle { stroke: #fff; stroke-width: 1.6; fill: none; }
.pbi path[stroke="#8f8f8f"] { stroke: #8f8f8f; }
.pbi-z { width: 16px; height: 16px; }

/* taskbar */
.taskbar { width: 93px; flex: none; height: 1080px; background: #1f1f1f; display: flex; flex-direction: column; align-items: stretch; }
.tk { height: 59px; display: flex; align-items: center; justify-content: center; position: relative; flex: none; padding-right: 1px; }
.tk-s { height: 50px; }
.tk-view { height: 49px; }
.tk-mail { margin-top: 5px; height: 58px; }
.ti { width: 20px; height: 20px; flex: none; }
.tk-mail .ti { width: 30px; height: 26px; margin-top: -1px; }
.badge { position: absolute; left: 43px; top: 34px; width: 36px; height: 17px; line-height: 15px; border: 1px solid #8a8a8a; border-radius: 9px; background: #222; color: #fff; font-size: 13px; text-align: center; font-family: "DejaVu Sans", sans-serif; }
.tk-active { background: #4b4b4b; border-right: 3px solid #76b9ed; padding-right: 0; }
.chromeic { width: 27px; height: 27px; border-radius: 50%; background: conic-gradient(#ea4335 0 30deg, #fbbc04 30deg 120deg, #34a853 120deg 270deg, #ea4335 270deg); display: flex; align-items: center; justify-content: center; transform: translate(1px, -2px); }
.chromeic-in { width: 13px; height: 13px; border-radius: 50%; background: #4a8fe8; border: 2px solid #fff; }
.chromeava { position: absolute; left: 43px; top: 25px; width: 22px; height: 23px; }
.ti-db { width: 22px; height: 26px; }
.ti-edge { width: 30px; height: 30px; }
.ti-folder { width: 28px; height: 20px; }
.ti-tg { width: 26px; height: 26px; }
.ti-app { width: 28px; height: 20px; }
.tk-ind { position: absolute; right: 0; top: 4px; bottom: 0; width: 3px; background: #76b9ed; }

.tray { margin-top: auto; display: flex; flex-direction: column; align-items: center; color: #e8e8e8; }
.chev { width: 10px; height: 18px; margin-right: 52px; }
.chev path { stroke: #ddd; stroke-width: 1.2; fill: none; }
.trayrow { display: flex; align-items: center; gap: 10px; margin-top: 12px; transform: translateX(3px); }
.tri { width: 20px; height: 17px; flex: none; }
.tri path { stroke: #ddd; stroke-width: 1; fill: none; }
.tri-wifi { width: 17px; }
.clock { font-family: "Open Sans", "Noto Sans", sans-serif; font-size: 14.5px; line-height: 22px; text-align: center; margin-top: 23px; width: 93px; }
.action { width: 20px; height: 18px; margin-top: 24px; }
.action path { stroke: #eee; stroke-width: 1; fill: none; }
.tkline { width: 93px; height: 1px; background: #777; margin: 21px 0 5px; }
```
